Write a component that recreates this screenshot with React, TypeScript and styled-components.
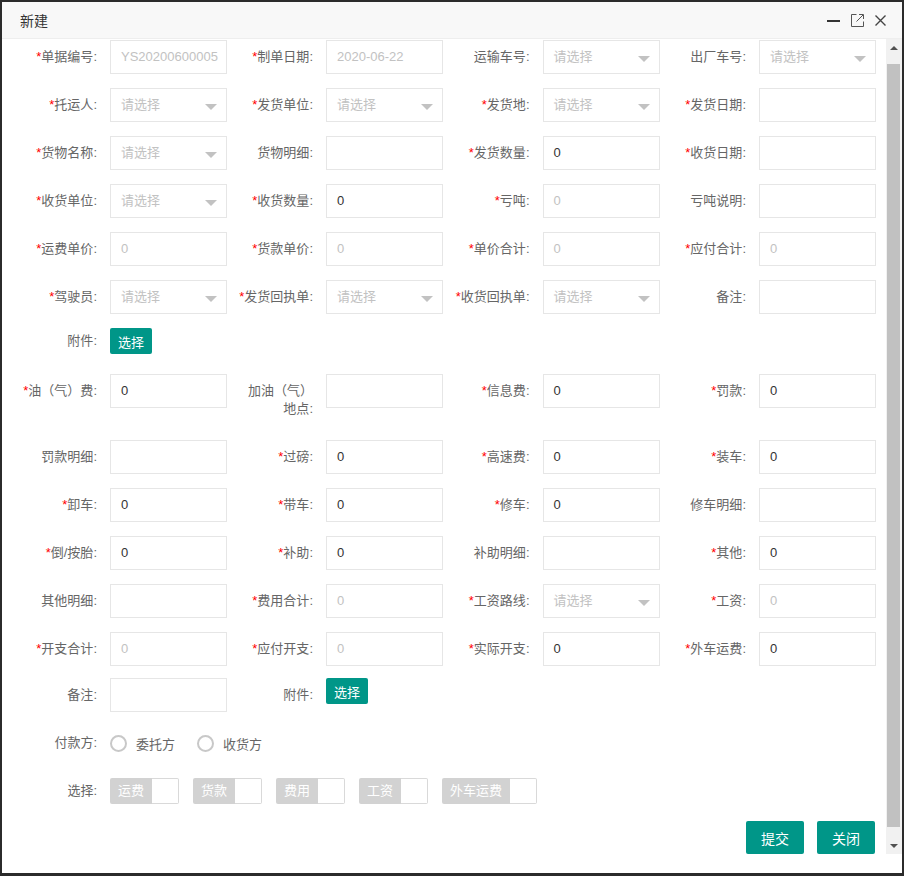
import React from "react";
import styled, { createGlobalStyle } from "styled-components";

const GlobalStyle = createGlobalStyle`
  html, body {
    margin: 0;
    padding: 0;
    background: #2b2b2b;
  }
  * {
    box-sizing: border-box;
  }
`;

const FONT = `"Liberation Sans", "Noto Sans CJK SC", sans-serif`;

const Page = styled.div`
  width: 904px;
  height: 876px;
  padding: 2px 2px 3px 2px;
  font-family: ${FONT};
`;

const Dialog = styled.div`
  width: 100%;
  height: 100%;
  background: #fff;
  display: flex;
  flex-direction: column;
`;

const TitleBar = styled.div`
  height: 37px;
  flex-shrink: 0;
  background: #f8f8f8;
  border-bottom: 1px solid #eeeeee;
  display: flex;
  align-items: center;
  padding: 0 16px 0 18px;
  font-size: 14px;
  color: #333;
`;

const TitleText = styled.div`
  flex: 1;
`;

const TitleTools = styled.div`
  display: flex;
  align-items: center;
  gap: 11px;
  svg {
    display: block;
  }
`;

const BodyWrap = styled.div`
  height: 815px;
  display: flex;
  flex-shrink: 0;
`;

const Content = styled.div`
  flex: 1;
  overflow: hidden;
  padding: 1px 8px 0 10px;
`;

const ScrollBar = styled.div`
  width: 16px;
  background: #f1f1f1;
  display: flex;
  flex-direction: column;
`;

const ScrollArrow = styled.div<{ $down?: boolean }>`
  height: 17px;
  display: flex;
  align-items: center;
  justify-content: center;
  &::after {
    content: "";
    border-left: 4px solid transparent;
    border-right: 4px solid transparent;
    ${(p) =>
      p.$down
        ? "border-top: 4px solid #505050;"
        : "border-bottom: 4px solid #505050;"}
  }
`;

const ScrollTrack = styled.div`
  flex: 1;
  padding: 8px 2px 10px 1px;
  display: flex;
`;

const ScrollThumb = styled.div`
  flex: 1;
  background: #c1c1c1;
`;

const Row = styled.div<{ $mb?: number }>`
  display: grid;
  grid-template-columns: 216px 216.5px 216.5px 216px;
  margin-bottom: ${(p) => p.$mb ?? 14}px;
`;

const FullRow = styled.div`
  display: flex;
  align-items: center;
  height: 34px;
  margin-bottom: 14px;
`;

const Field = styled.div`
  display: flex;
  align-items: flex-start;
`;

const Label = styled.label<{ $tight?: boolean }>`
  width: 98px;
  flex-shrink: 0;
  padding: ${(p) => (p.$tight ? "4px 13px 10px 0" : "8px 13px 8px 0")};
  text-align: right;
  line-height: 18px;
  font-size: 13px;
  color: #666;
  white-space: nowrap;
`;

const InlineLabel = styled(Label)`
  padding-top: 0;
  padding-bottom: 0;
`;

const Star = styled.span`
  color: #ff0000;
`;

const Input = styled.div<{ $disabled?: boolean }>`
  width: 117px;
  height: 34px;
  border: 1px solid #e6e6e6;
  background: #fff;
  padding: 0 0 1px 10px;
  display: flex;
  align-items: center;
  font-size: 13px;
  line-height: 18px;
  color: ${(p) => (p.$disabled ? "#c2c2c2" : "#333")};
  white-space: nowrap;
  overflow: hidden;
`;

const Select = styled(Input)`
  position: relative;
  color: #c2c2c2;
  &::after {
    content: "";
    position: absolute;
    right: 9px;
    top: 15px;
    border-left: 6px solid transparent;
    border-right: 6px solid transparent;
    border-top: 6px solid #c2c2c2;
  }
`;

const Button = styled.button<{ $small?: boolean }>`
  border: none;
  border-radius: 2px;
  background: #009688;
  color: #fff;
  font-family: ${FONT};
  font-size: ${(p) => (p.$small ? "13px" : "14px")};
  height: ${(p) => (p.$small ? "26px" : "33px")};
  width: ${(p) => (p.$small ? "42px" : "58px")};
  padding: 0;
  cursor: pointer;
`;

const RadioGroup = styled.div`
  display: flex;
  align-items: center;
`;

const Radio = styled.label`
  display: flex;
  align-items: center;
  font-size: 13px;
  color: #666;
  margin-right: 22px;
`;

const RadioCircle = styled.span`
  width: 17px;
  height: 17px;
  border: 2px solid #c8c8c8;
  border-radius: 50%;
  margin-right: 9px;
`;

const CheckGroup = styled.div`
  display: flex;
  gap: 14px;
`;

const Check = styled.div`
  display: flex;
  height: 26px;
`;

const CheckText = styled.span`
  background: #d2d2d2;
  color: #fff;
  font-size: 13px;
  padding: 0 8px;
  line-height: 26px;
  border-radius: 2px 0 0 2px;
`;

const CheckBox = styled.span`
  width: 27px;
  border: 1px solid #d9d9d9;
  border-left: none;
  border-radius: 0 2px 2px 0;
  background: #fff;
`;

const Footer = styled.div`
  display: flex;
  justify-content: flex-end;
  gap: 13px;
  padding-right: 3px;
  margin-top: -1px;
`;

type Kind = "input" | "select" | "button";
type F = {
  label: React.ReactNode;
  req?: boolean;
  kind: Kind;
  value?: string;
  disabled?: boolean;
  tight?: boolean;
};

const inp = (label: React.ReactNode, req = false, value = "", disabled = false): F => ({
  label,
  req,
  kind: "input",
  value,
  disabled,
});
const sel = (label: string, req = false): F => ({ label, req, kind: "select" });
const btn = (label: string, tight = false): F => ({ label, kind: "button", tight });

const rows: F[][] = [
  [
    inp("单据编号", true, "YS20200600005", true),
    inp("制单日期", true, "2020-06-22", true),
    sel("运输车号"),
    sel("出厂车号"),
  ],
  [sel("托运人", true), sel("发货单位", true), sel("发货地", true), inp("发货日期", true)],
  [sel("货物名称", true), inp("货物明细"), inp("发货数量", true, "0"), inp("收货日期", true)],
  [sel("收货单位", true), inp("收货数量", true, "0"), inp("亏吨", true, "0", true), inp("亏吨说明")],
  [
    inp("运费单价", true, "0", true),
    inp("货款单价", true, "0", true),
    inp("单价合计", true, "0", true),
    inp("应付合计", true, "0", true),
  ],
  [sel("驾驶员", true), sel("发货回执单", true), sel("收货回执单", true), inp("备注")],
  [btn("附件", true)],
  [
    inp("油（气）费", true, "0"),
    inp(
      <>
        加油（气）
        <br />
        地点
      </>
    ),
    inp("信息费", true, "0"),
    inp("罚款", true, "0"),
  ],
  [inp("罚款明细"), inp("过磅", true, "0"), inp("高速费", true, "0"), inp("装车", true, "0")],
  [inp("卸车", true, "0"), inp("带车", true, "0"), inp("修车", true, "0"), inp("修车明细")],
  [inp("倒/按胎", true, "0"), inp("补助", true, "0"), inp("补助明细"), inp("其他", true, "0")],
  [
    inp("其他明细"),
    inp("费用合计", true, "0", true),
    sel("工资路线", true),
    inp("工资", true, "0", true),
  ],
  [
    inp("开支合计", true, "0", true),
    inp("应付开支", true, "0", true),
    inp("实际开支", true, "0"),
    inp("外车运费", true, "0"),
  ],
  [inp("备注"), btn("附件")],
];

function Control({ f }: { f: F }) {
  if (f.kind === "select") return <Select>请选择</Select>;
  if (f.kind === "button") return <Button $small>选择</Button>;
  return <Input $disabled={f.disabled}>{f.value}</Input>;
}

function FormField({ f }: { f: F }) {
  return (
    <Field>
      <Label $tight={f.tight}>
        {f.req && <Star>*</Star>}
        {f.label}:
      </Label>
      <Control f={f} />
    </Field>
  );
}

const checks = ["运费", "货款", "费用", "工资", "外车运费"];

function MinIcon() {
  return (
    <svg width="13" height="14" viewBox="0 0 13 14">
      <rect x="0" y="7" width="13" height="2" fill="#333" />
    </svg>
  );
}

function MaxIcon() {
  return (
    <svg width="13" height="13" viewBox="0 0 13 13" fill="none" stroke="#555" strokeWidth="1">
      <path d="M5.5 0.5H0.5V12.5H12.5V7.5" />
      <path d="M5.5 7.5L12 1M8 0.5H12.5V5" />
    </svg>
  );
}

function CloseIcon() {
  return (
    <svg width="11" height="11" viewBox="0 0 11 11" stroke="#444" strokeWidth="1.4">
      <path d="M0.5 0.5L10.5 10.5M10.5 0.5L0.5 10.5" />
    </svg>
  );
}

export default function App() {
  return (
    <Page>
      <GlobalStyle />
      <Dialog>
        <TitleBar>
          <TitleText>新建</TitleText>
          <TitleTools>
            <MinIcon />
            <MaxIcon />
            <CloseIcon />
          </TitleTools>
        </TitleBar>
        <BodyWrap>
          <Content>
            {rows.map((r, i) => (
              <Row key={i} $mb={i === 12 ? 12 : 14}>
                {r.map((f, j) => (
                  <FormField key={j} f={f} />
                ))}
              </Row>
            ))}
            <FullRow>
              <InlineLabel>付款方:</InlineLabel>
              <RadioGroup>
                <Radio>
                  <RadioCircle />
                  委托方
                </Radio>
                <Radio>
                  <RadioCircle />
                  收货方
                </Radio>
              </RadioGroup>
            </FullRow>
            <FullRow>
              <InlineLabel>选择:</InlineLabel>
              <CheckGroup>
                {checks.map((c) => (
                  <Check key={c}>
                    <CheckText>{c}</CheckText>
                    <CheckBox />
                  </Check>
                ))}
              </CheckGroup>
            </FullRow>
            <Footer>
              <Button>提交</Button>
              <Button>关闭</Button>
            </Footer>
          </Content>
          <ScrollBar>
            <ScrollArrow />
            <ScrollTrack>
              <ScrollThumb />
            </ScrollTrack>
            <ScrollArrow $down />
          </ScrollBar>
        </BodyWrap>
      </Dialog>
    </Page>
  );
}
